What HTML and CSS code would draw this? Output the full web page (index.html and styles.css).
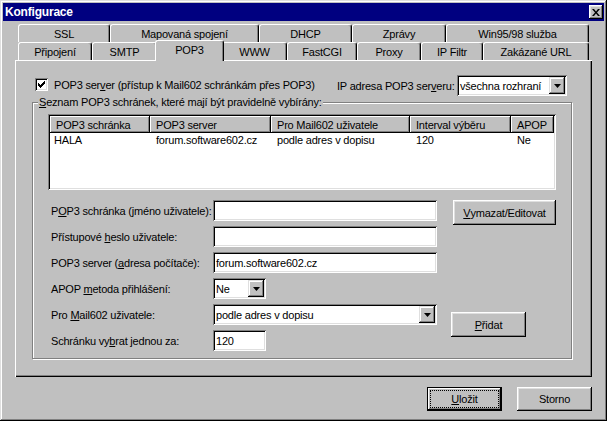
FILE: index.html
```html
<!DOCTYPE html>
<html lang="cs">
<head>
<meta charset="utf-8">
<title>Konfigurace</title>
<link rel="stylesheet" href="styles.css">
</head>
<body>
<div class="window">
  <div class="titlebar">
    <span class="title">Konfigurace</span>
    <span class="close"><svg width="8" height="7" viewBox="0 0 8 7"><path d="M0 0h2l2 2.5 2-2.5h2l-3 3.5 3 3.5h-2l-2-2.5-2 2.5h-2l3-3.5z" fill="#000"/></svg></span>
  </div>
  <div class="content">
    <div class="tabs">
      <div class="tabrow">
        <div class="tab w-ssl">SSL</div>
        <div class="tab w-map">Mapovaná spojení</div>
        <div class="tab w-dhcp">DHCP</div>
        <div class="tab w-zpr">Zprávy</div>
        <div class="tab w-win">Win95/98 služba</div>
      </div>
      <div class="tabrow">
        <div class="tab w-pri">Připojení</div>
        <div class="tab w-smtp">SMTP</div>
        <div class="tab sel">POP3</div>
        <div class="tab w-www">WWW</div>
        <div class="tab w-fcgi">FastCGI</div>
        <div class="tab w-proxy">Proxy</div>
        <div class="tab w-ipf">IP Filtr</div>
        <div class="tab w-url">Zakázané URL</div>
      </div>
    </div>
    <div class="panel">
      <div class="toprow">
        <div class="check">
          <span class="cbox"><svg width="7" height="7" viewBox="0 0 7 7"><path d="M0 2h1v1h1v1h1v-1h1v-1h1v-1h1v-1h1v3h-1v1h-1v1h-1v1h-1v1h-1v-1h-1v-1h-1z" fill="#000"/></svg></span>
          <span>POP3 ser<u>v</u>er (přístup k Mail602 schránkám přes POP3)</span>
        </div>
        <span class="iplabel">IP adresa POP3 ser<u>v</u>eru:</span>
        <div class="combo w-ip"><span class="val">všechna rozhraní</span><span class="drop"><svg width="7" height="4" viewBox="0 0 7 4"><path d="M0 0h7l-3.5 4z" fill="#000"/></svg></span></div>
      </div>
      <div class="group">
        <span class="legend"><u>S</u>eznam POP3 schránek, které mají být pravidelně vybírány:</span>
        <div class="listview">
          <div class="lv-head">
            <div class="hc c1">POP3 schránka</div>
            <div class="hc c2">POP3 server</div>
            <div class="hc c3">Pro Mail602 uživatele</div>
            <div class="hc c4">Interval výběru</div>
            <div class="hc c5">APOP</div>
          </div>
          <div class="lv-row">
            <div class="dc c1 first">HALA</div>
            <div class="dc c2">forum.software602.cz</div>
            <div class="dc c3">podle adres v dopisu</div>
            <div class="dc c4">120</div>
            <div class="dc c5">Ne</div>
          </div>
        </div>
        <div class="formarea">
          <div class="fields">
            <label class="lbl">P<u>O</u>P3 schránka (jméno uživatele):</label>
            <div class="field"></div>
            <label class="lbl">Přístupové <u>h</u>eslo uživatele:</label>
            <div class="field"></div>
            <label class="lbl">POP3 server (<u>a</u>dresa počítače):</label>
            <div class="field">forum.software602.cz</div>
            <label class="lbl">APOP <u>m</u>etoda přihlášení:</label>
            <div class="combo w-ne"><span class="val">Ne</span><span class="drop"><svg width="7" height="4" viewBox="0 0 7 4"><path d="M0 0h7l-3.5 4z" fill="#000"/></svg></span></div>
            <label class="lbl">Pro <u>M</u>ail602 uživatele:</label>
            <div class="combo"><span class="val">podle adres v dopisu</span><span class="drop"><svg width="7" height="4" viewBox="0 0 7 4"><path d="M0 0h7l-3.5 4z" fill="#000"/></svg></span></div>
            <label class="lbl">Schránku vy<u>b</u>rat jednou za:</label>
            <div class="field w-num">120</div>
          </div>
          <div class="side">
            <button class="btn btn-edit"><u>V</u>ymazat/Editovat</button>
            <button class="btn btn-add"><u>P</u>řidat</button>
          </div>
        </div>
      </div>
    </div>
    <div class="footer">
      <button class="btn btn-default"><span class="focus"><u>U</u>ložit</span></button>
      <button class="btn btn-foot">Storno</button>
    </div>
  </div>
</div>
</body>
</html>
```
FILE: styles.css
```css
* { box-sizing: border-box; }
body {
  margin: 0;
  background: #c0c0c0;
  font-family: "Liberation Sans", Arial, sans-serif;
  font-size: 11px;
  letter-spacing: -0.2px;
  color: #000;
}
.window {
  width: 607px;
  height: 421px;
  background: #c0c0c0;
  padding: 3px;
  box-shadow: inset -1px -1px #000, inset 1px 1px #dfdfdf, inset -2px -2px #808080, inset 2px 2px #fff;
}
.titlebar {
  height: 18px;
  background: #000080;
  display: flex;
  align-items: center;
  justify-content: space-between;
  padding: 0 1px 0 2px;
}
.title {
  color: #fff;
  font-weight: bold;
  font-size: 12px;
}
.close {
  width: 14px;
  height: 14px;
  background: #c0c0c0;
  display: flex;
  align-items: center;
  justify-content: center;
  box-shadow: inset -1px -1px #000, inset 1px 1px #fff, inset -2px -2px #808080, inset 2px 2px #dfdfdf;
}
.content { padding: 3px 12px 0; }
.tabs { padding-left: 3px; }
.tabrow { display: flex; height: 18px; }
.tab {
  height: 18px;
  border-top: 1px solid #fff;
  border-left: 1px solid #fff;
  border-right: 1px solid #000;
  border-radius: 3px 3px 0 0;
  box-shadow: inset -1px 0 #808080;
  display: flex;
  align-items: center;
  justify-content: center;
  white-space: nowrap;
  background: #c0c0c0;
}
.w-ssl { width: 92px; }
.w-map { width: 149px; }
.w-dhcp { width: 93px; }
.w-zpr { width: 94px; }
.w-win { width: 143px; }
.w-pri { width: 74px; }
.w-smtp { width: 65px; }
.w-www { width: 65px; }
.w-fcgi { width: 70px; }
.w-proxy { width: 64px; }
.w-ipf { width: 62px; }
.w-url { width: 106px; }
.tab.sel {
  width: 69px;
  height: 21px;
  margin: -2px -2px 0;
  padding-bottom: 3px;
  position: relative;
  z-index: 1;
}
.panel {
  height: 317px;
  padding: 15px 0 0 17px;
  box-shadow: inset 1px 1px #fff, inset -1px -1px #000, inset -2px -2px #808080;
}
.toprow { display: flex; align-items: center; height: 21px; }
.check {
  width: 302px;
  margin-left: 3px;
  display: flex;
  align-items: center;
  gap: 6px;
  white-space: nowrap;
  margin-bottom: 2px;
}
.cbox {
  width: 13px;
  height: 13px;
  background: #fff;
  display: flex;
  align-items: center;
  justify-content: center;
  box-shadow: inset 1px 1px #808080, inset -1px -1px #fff, inset 2px 2px #000, inset -2px -2px #dfdfdf;
}
.iplabel { width: 120px; white-space: nowrap; }
.combo {
  height: 21px;
  display: flex;
  align-items: center;
  background: #fff;
  padding: 2px;
  box-shadow: inset 1px 1px #808080, inset -1px -1px #fff, inset 2px 2px #000, inset -2px -2px #dfdfdf;
}
.combo .val { flex: 1; padding-left: 1px; white-space: nowrap; overflow: hidden; }
.drop {
  width: 16px;
  height: 17px;
  background: #c0c0c0;
  display: flex;
  align-items: center;
  justify-content: center;
  box-shadow: inset -1px -1px #000, inset 1px 1px #dfdfdf, inset -2px -2px #808080, inset 2px 2px #fff;
}
.w-ip { width: 110px; }
.w-ne { width: 53px; }
.group {
  position: relative;
  width: 540px;
  height: 257px;
  margin-top: 6px;
  border: 1px solid #808080;
  box-shadow: inset 1px 1px #fff, 1px 1px #fff;
  padding: 11px 0 0 15px;
}
.legend {
  position: absolute;
  top: -8px;
  left: 5px;
  background: #c0c0c0;
  padding: 0 1px;
  line-height: 14px;
  white-space: nowrap;
}
.listview {
  width: 508px;
  height: 76px;
  background: #fff;
  padding: 2px;
  box-shadow: inset 1px 1px #808080, inset -1px -1px #fff, inset 2px 2px #000, inset -2px -2px #dfdfdf;
}
.lv-head { display: flex; height: 17px; }
.hc {
  height: 17px;
  background: #c0c0c0;
  padding-left: 6px;
  display: flex;
  align-items: center;
  white-space: nowrap;
  box-shadow: inset -1px -1px #000, inset 1px 1px #fff, inset -2px -2px #808080;
}
.c1 { width: 100px; }
.c2 { width: 121px; }
.c3 { width: 139px; }
.c4 { width: 101px; }
.c5 { width: 43px; }
.lv-row { display: flex; height: 14px; align-items: center; }
.dc { padding-left: 6px; white-space: nowrap; }
.dc.first { padding-left: 4px; }
.formarea { display: flex; margin-top: 10px; }
.fields {
  display: grid;
  grid-template-columns: 162px 224px;
  grid-auto-rows: 21px;
  row-gap: 5px;
  margin-left: 3px;
  align-items: center;
}
.lbl { white-space: nowrap; }
.field {
  height: 21px;
  background: #fff;
  padding-left: 3px;
  display: flex;
  align-items: center;
  box-shadow: inset 1px 1px #808080, inset -1px -1px #fff, inset 2px 2px #000, inset -2px -2px #dfdfdf;
}
.w-num { width: 53px; }
.side { display: flex; flex-direction: column; align-items: flex-start; margin-left: 16px; }
.btn {
  font: inherit;
  letter-spacing: inherit;
  color: #000;
  background: #c0c0c0;
  border: 0;
  padding: 0;
  display: flex;
  align-items: center;
  justify-content: center;
  box-shadow: inset -1px -1px #000, inset 1px 1px #fff, inset -2px -2px #808080, inset 2px 2px #dfdfdf;
}
.btn-edit { width: 103px; height: 25px; }
.btn-add { width: 75px; height: 25px; margin-top: 87px; margin-left: -2px; }
.footer {
  display: flex;
  justify-content: flex-end;
  gap: 15px;
  padding-top: 10px;
}
.btn-foot { width: 75px; height: 24px; }
.btn-default {
  width: 75px;
  height: 24px;
  padding: 3px;
  box-shadow: inset 0 0 0 1px #000, inset -2px -2px #000, inset 2px 2px #fff, inset -3px -3px #808080;
}
.focus {
  width: 100%;
  height: 100%;
  border: 1px dotted #000;
  display: flex;
  align-items: center;
  justify-content: center;
}
```
